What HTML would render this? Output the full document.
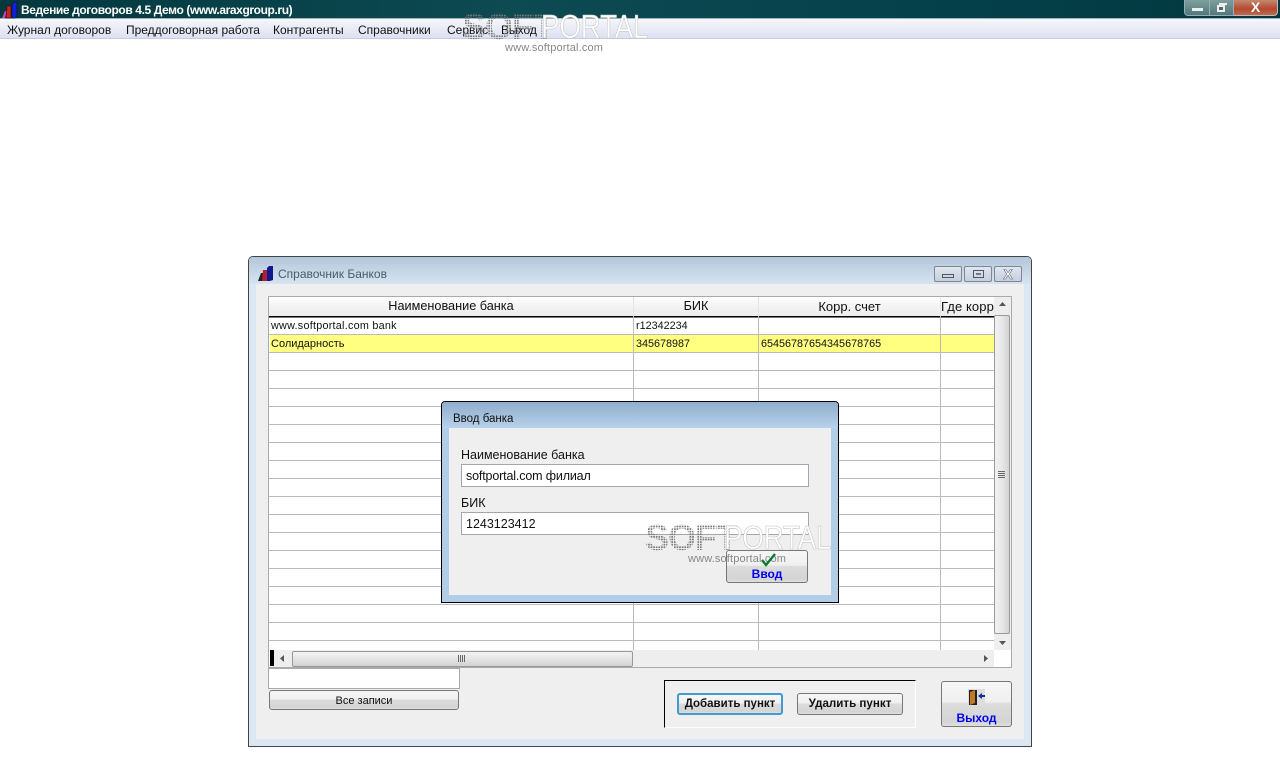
<!DOCTYPE html>
<html><head><meta charset="utf-8"><style>
html,body{margin:0;padding:0;width:1280px;height:764px;overflow:hidden;background:#fff;font-family:"Liberation Sans",sans-serif;color:#000}
div,span{position:absolute;box-sizing:border-box;white-space:nowrap}
.m{top:23px;font-size:12px;line-height:14px;color:#111}
.c{font-size:10.8px;line-height:12px;color:#111}
.h{top:299px;font-size:12.7px;line-height:15px;text-align:center;color:#111}
.btn{border:1px solid #777;border-radius:3px;background:linear-gradient(#f6f6f6 0,#f0f0f0 45%,#dcdcdc 50%,#d4d4d4 90%,#e0e0e0 100%);text-align:center}
.soft{font-size:36px;line-height:36px;font-weight:bold;letter-spacing:-1px;color:transparent;background:radial-gradient(circle,#7a7a7a 0.9px,transparent 1.1px) 0 0/2.6px 2.6px;-webkit-background-clip:text;background-clip:text}
.port{font-size:33px;line-height:36px;letter-spacing:-.5px;color:#fff;-webkit-text-stroke:.6px #c4c4c4;transform:scaleX(.85);transform-origin:0 0}
.url{font-size:11px;line-height:12px;color:#888;letter-spacing:.15px}
</style></head><body>
<!-- title bar -->
<div style="left:0;top:0;width:1280px;height:19px;background:linear-gradient(90deg,#03383f,#0d4a52 40%,#04404a 75%,#03383f)"></div>
<div style="left:0;top:18px;width:1280px;height:1px;background:#9fb5b8"></div>
<svg style="position:absolute;left:2px;top:1px" width="16" height="18" viewBox="0 0 16 18"><path d="M0 17L3 10H5L3 17Z" fill="#c040c0"/><path d="M4 17L5 5H9V17Z" fill="#d02020" stroke="#111" stroke-width=".6"/><path d="M10 17V3L12 1H15V16L13 17Z" fill="#1020e0" stroke="#111" stroke-width=".6"/></svg>
<div style="left:21px;top:3px;font-size:12px;line-height:14px;font-weight:bold;color:#fff;letter-spacing:-.39px">Ведение договоров 4.5 Демо (www.araxgroup.ru)</div>
<!-- caption buttons -->
<div style="left:1184px;top:0;width:26px;height:16px;border:1px solid #9ab;border-top:0;border-radius:0 0 0 4px;background:linear-gradient(#7f9e9e,#4f7a7a)"><div style="left:7px;top:8px;width:11px;height:3px;background:#eee"></div></div>
<div style="left:1210px;top:0;width:24px;height:16px;border:1px solid #9ab;border-top:0;border-left:0;background:linear-gradient(#7f9e9e,#4f7a7a)"><div style="left:7px;top:5px;width:8px;height:7px;border:2px solid #eee;background:#567"></div><div style="left:9px;top:3px;width:8px;height:2px;background:#eee"></div></div>
<div style="left:1234px;top:0;width:44px;height:16px;border:1px solid #bbb;border-top:0;border-left:0;border-radius:0 0 4px 0;background:linear-gradient(#c08a70,#b5482f 60%,#bb6b4f)"><div style="left:0;width:100%;text-align:center;top:0;font-size:14px;line-height:15px;font-weight:bold;color:#fff">X</div></div>
<!-- menu -->
<div style="left:0;top:19px;width:1280px;height:20px;background:linear-gradient(#f6f7fb,#e9ebf6 50%,#dde1f1);border-bottom:1px solid #c6cbe0"></div>
<div class="m" style="left:7px">Журнал договоров</div>
<div class="m" style="left:126px;letter-spacing:-.03px">Преддоговорная работа</div>
<div class="m" style="left:273px">Контрагенты</div>
<div class="m" style="left:358px">Справочники</div>
<div class="m" style="left:447px">Сервис</div>
<div class="m" style="left:501px">Выход</div>
<!-- top watermark -->
<div class="soft" style="left:462px;top:9px">SOFT</div>
<div class="port" style="left:541px;top:9px">PORTAL</div>
<div class="url" style="left:505px;top:42px">www.softportal.com</div>

<!-- main window -->
<div style="left:248px;top:256px;width:784px;height:491px;border:1px solid #444;border-radius:5px 5px 0 0;background:#dbe7f3"></div>
<div style="left:249px;top:257px;width:782px;height:27px;border-radius:4px 4px 0 0;background:linear-gradient(#b4c6da,#d6e4f1)"></div>
<div style="left:256px;top:284px;width:768px;height:455px;background:#efefef"></div>
<svg style="position:absolute;left:258px;top:265px" width="16" height="17" viewBox="0 0 16 17"><path d="M0 16L3 8H5V16Z" fill="#222"/><path d="M4 16L5 5H9V16Z" fill="#b02030"/><path d="M9 16V3L11 1H15V15L12 16Z" fill="#101a90"/></svg>
<div style="left:278px;top:267px;font-size:12px;line-height:14px;color:#4b5a66">Справочник Банков</div>
<div style="left:934px;top:266px;width:28px;height:16px;border:1px solid #7d8894;border-radius:2px;background:linear-gradient(#dfe6ee,#c5d0dc)"><div style="left:7px;top:7px;width:12px;height:4px;border:1px solid #556"></div></div>
<div style="left:964px;top:266px;width:28px;height:16px;border:1px solid #7d8894;border-radius:2px;background:linear-gradient(#dfe6ee,#c5d0dc)"><div style="left:8px;top:3px;width:11px;height:8px;border:1px solid #556"></div><div style="left:11px;top:6px;width:5px;height:2px;background:#778"></div></div>
<div style="left:994px;top:266px;width:28px;height:16px;border:1px solid #7d8894;border-radius:2px;background:linear-gradient(#dfe6ee,#c5d0dc)"><div style="left:0;width:100%;top:0;text-align:center;font-size:14px;line-height:14px;font-weight:bold;color:#fff;-webkit-text-stroke:.6px #667">X</div></div>

<!-- grid -->
<div style="left:268px;top:296px;width:744px;height:372px;border:1px solid #aaa;background:#fff"></div>
<div style="left:269px;top:297px;width:725px;height:19px;background:linear-gradient(#fff,#f4f4f4 45%,#ececec)"></div>
<div style="left:269px;top:316px;width:725px;height:1px;background:#000"></div>
<div style="left:269px;top:317px;width:725px;height:1px;background:#777"></div>
<div style="left:269px;top:334px;width:725px;height:307px;background:repeating-linear-gradient(#bbb 0,#bbb 1px,transparent 1px,transparent 18px)"></div>
<div style="left:270px;top:335px;width:724px;height:17px;background:#ffff80"></div>
<div style="left:633px;top:297px;width:1px;height:353px;background:#bbb"></div>
<div style="left:758px;top:297px;width:1px;height:353px;background:#bbb"></div>
<div style="left:940px;top:297px;width:1px;height:353px;background:#bbb"></div>
<div style="left:633px;top:297px;width:1px;height:19px;background:#e4e4e4"></div>
<div style="left:758px;top:297px;width:1px;height:19px;background:#e4e4e4"></div>
<div style="left:940px;top:297px;width:1px;height:19px;background:#e4e4e4"></div>
<div class="h" style="left:269px;width:364px">Наименование банка</div>
<div class="h" style="left:634px;width:124px">БИК</div>
<div class="h" style="left:759px;width:181px;font-size:13px">Корр. счет</div>
<div style="left:941px;top:299px;width:53px;height:15px;overflow:hidden;font-size:13px;line-height:15px;color:#111;letter-spacing:.1px">Где корр. счет</div>
<div class="c" style="left:271px;top:320px;letter-spacing:.25px">www.softportal.com bank</div>
<div class="c" style="left:636px;top:320px">r12342234</div>
<div class="c" style="left:271px;top:338px;font-size:11px">Солидарность</div>
<div class="c" style="left:636px;top:338px">345678987</div>
<div class="c" style="left:761px;top:338px">65456787654345678765</div>
<!-- v scrollbar -->
<div style="left:994px;top:297px;width:17px;height:353px;background:#eee"></div>
<svg style="position:absolute;left:999px;top:302px" width="7" height="4"><path d="M3.5 0L7 4H0Z" fill="#555"/></svg>
<div style="left:994px;top:315px;width:16px;height:319px;border:1px solid #999;border-radius:2px;background:linear-gradient(90deg,#f2f2f2,#e8e8e8 50%,#d2d2d2)"></div>
<div style="left:998px;top:471px;width:7px;height:7px;background:repeating-linear-gradient(#666 0,#666 1px,transparent 1px,transparent 2px)"></div>
<svg style="position:absolute;left:999px;top:641px" width="7" height="4"><path d="M0 0H7L3.5 4Z" fill="#555"/></svg>
<!-- h scrollbar -->
<div style="left:270px;top:650px;width:724px;height:17px;background:#eee"></div>
<div style="left:270px;top:650px;width:4px;height:16px;background:#000"></div>
<svg style="position:absolute;left:280px;top:655px" width="4" height="7"><path d="M4 0V7L0 3.5Z" fill="#555"/></svg>
<div style="left:292px;top:651px;width:341px;height:16px;border:1px solid #999;border-radius:2px;background:linear-gradient(#f2f2f2,#e8e8e8 40%,#d2d2d2)"></div>
<div style="left:458px;top:655px;width:7px;height:7px;background:repeating-linear-gradient(90deg,#666 0,#666 1px,transparent 1px,transparent 2px)"></div>
<svg style="position:absolute;left:984px;top:655px" width="4" height="7"><path d="M0 0V7L4 3.5Z" fill="#555"/></svg>
<!-- bottom left -->
<div style="left:268px;top:668px;width:192px;height:21px;border:1px solid #aaa;background:#fff"></div>
<div class="btn" style="left:269px;top:690px;width:190px;height:20px;font-size:11px;line-height:20px;color:#111">Все записи</div>
<!-- bottom panel -->
<div style="left:664px;top:680px;width:252px;height:48px;border-top:1px solid #000;border-left:1px solid #000;border-right:1px solid #fff;border-bottom:1px solid #fff"></div>
<div class="btn" style="left:677px;top:693px;width:106px;height:22px;border:2px solid #3f9bd0;font-size:11.5px;line-height:19px;font-weight:bold;color:#111">Добавить пункт</div>
<div class="btn" style="left:797px;top:693px;width:106px;height:22px;font-size:11.6px;line-height:20px;font-weight:bold;color:#111">Удалить пункт</div>
<div class="btn" style="left:941px;top:681px;width:71px;height:46px;font-size:12px;line-height:14px;font-weight:bold;color:#0000f0"><span style="left:0;width:100%;top:29px">Выход</span></div>
<svg style="position:absolute;left:968px;top:689px" width="17" height="17" viewBox="0 0 17 17"><rect x="0" y="0" width="17" height="17" fill="#ddd"/><path d="M1 1H9V16H1Z" fill="#222"/><path d="M2 3L7 1V14L2 16Z" fill="#c07a20"/><path d="M10 7L14 4V6H17V8H14V10Z" fill="#1030a0"/></svg>

<!-- dialog -->
<div style="left:441px;top:401px;width:398px;height:202px;border:1px solid #000;border-radius:4px 4px 0 0;background:#b3cde8"></div>
<div style="left:442px;top:402px;width:396px;height:26px;border-radius:3px 3px 0 0;background:linear-gradient(#8fadcd,#b8d1ea)"></div>
<div style="left:449px;top:428px;width:382px;height:167px;background:#efefef"></div>
<div style="left:453px;top:412px;font-size:11.5px;line-height:14px;color:#111">Ввод банка</div>
<div style="left:461px;top:448px;font-size:12.5px;line-height:15px;color:#111">Наименование банка</div>
<div style="left:461px;top:464px;width:348px;height:23px;border:1px solid #a5a5ad;background:#fff;font-size:12.5px;line-height:22px;padding-left:4px;color:#111;letter-spacing:-.15px">softportal.com филиал</div>
<div style="left:461px;top:496px;font-size:12.5px;line-height:15px;color:#111">БИК</div>
<div style="left:461px;top:512px;width:348px;height:23px;border:1px solid #a5a5ad;background:#fff;font-size:12.5px;line-height:22px;padding-left:4px;color:#111">1243123412</div>
<div class="btn" style="left:726px;top:550px;width:82px;height:33px;font-size:12px;line-height:14px;font-weight:bold;color:#0000f0"><span style="left:0;width:100%;top:16px">Ввод</span></div>
<!-- dialog watermark -->
<div class="soft" style="left:645px;top:520px">SOFT</div>
<div class="port" style="left:724px;top:520px">PORTAL</div>
<div class="url" style="left:688px;top:553px">www.softportal.com</div>
<svg style="position:absolute;left:761px;top:553px" width="15" height="14" viewBox="0 0 15 14"><path d="M1 7L5 12L14 1" fill="none" stroke="#0a7a30" stroke-width="2.4"/></svg>
</body></html>
